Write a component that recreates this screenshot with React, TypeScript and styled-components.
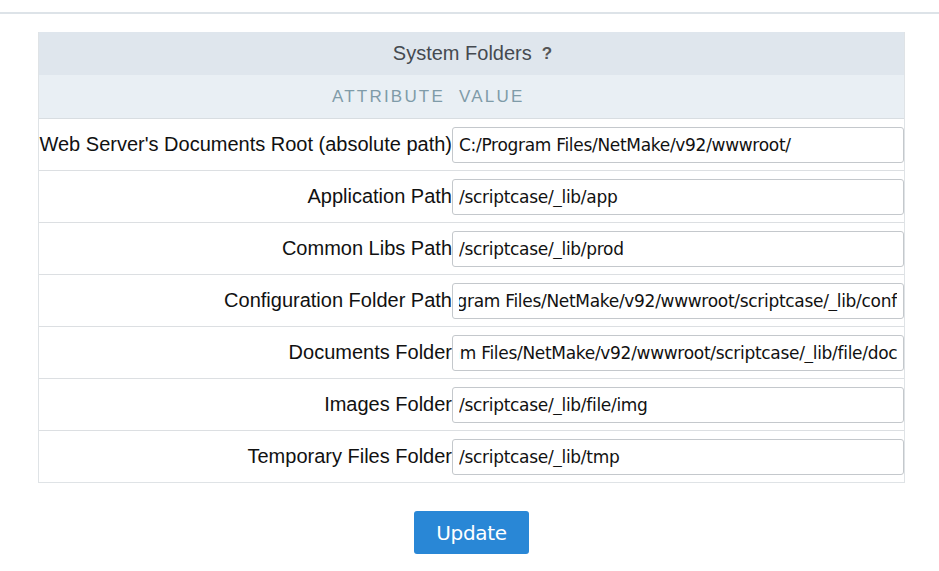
import React, { useEffect, useRef } from "react";
import styled, { createGlobalStyle } from "styled-components";

const Global = createGlobalStyle`
  body { margin: 0; font-family: "Liberation Sans", Arial, sans-serif; background: #fff; }
`;

const Page = styled.div`
  border-top: 2px solid #dde3e8;
  margin-top: 12px;
  padding: 18px 34px 0 38px;
`;

const Panel = styled.div`
  border: 1px solid #dfe3e6;
  border-top: none;
  display: grid;
  grid-template-columns: 413px 452px;
`;

const Title = styled.div`
  grid-column: 1 / -1;
  height: 43px;
  background: #dfe6ed;
  display: flex;
  align-items: center;
  justify-content: center;
  font-size: 20px;
  color: #454a50;
  gap: 10px;
  padding-left: 2px;
`;

const Help = styled.span`
  font-weight: bold;
  font-size: 17px;
  color: #555;
`;

const HeadCell = styled.div<{ $right?: boolean }>`
  height: 43px;
  background: #e9eff4;
  border-bottom: 1px solid #d8dde1;
  display: flex;
  align-items: center;
  justify-content: ${(p) => (p.$right ? "flex-end" : "flex-start")};
  padding: ${(p) => (p.$right ? "0 7px 0 0" : "0 0 0 7px")};
  font-size: 17px;
  letter-spacing: 2.2px;
  color: #7f9ba8;
`;

const Label = styled.div<{ $last?: boolean }>`
  height: 51px;
  border-bottom: ${(p) => (p.$last ? "none" : "1px solid #dcdfe2")};
  display: flex;
  align-items: center;
  justify-content: flex-end;
  font-size: 20px;
  color: #111;
  white-space: nowrap;
`;

const ValueCell = styled(Label)`
  justify-content: flex-start;
`;

const Input = styled.input`
  width: 452px;
  height: 36px;
  box-sizing: border-box;
  border: 1px solid #c4c8cc;
  border-radius: 3px;
  padding: 0 6px;
  font-family: "DejaVu Sans", Tahoma, sans-serif;
  font-size: 17px;
  letter-spacing: -0.3px;
  color: #111;
  outline: none;
`;

const Actions = styled.div`
  display: flex;
  justify-content: center;
  padding-top: 28px;
`;

const Button = styled.button`
  width: 115px;
  height: 43px;
  background: #2987d6;
  border: none;
  border-radius: 3px;
  color: #fff;
  font-family: "DejaVu Sans", Tahoma, sans-serif;
  font-size: 20px;
  letter-spacing: -0.3px;
`;

const rows: [string, string, boolean][] = [
  ["Web Server's Documents Root (absolute path)", "C:/Program Files/NetMake/v92/wwwroot/", false],
  ["Application Path", "/scriptcase/_lib/app", false],
  ["Common Libs Path", "/scriptcase/_lib/prod", false],
  ["Configuration Folder Path", "C:/Program Files/NetMake/v92/wwwroot/scriptcase/_lib/conf", true],
  ["Documents Folder", "C:/Program Files/NetMake/v92/wwwroot/scriptcase/_lib/file/doc", true],
  ["Images Folder", "/scriptcase/_lib/file/img", false],
  ["Temporary Files Folder", "/scriptcase/_lib/tmp", false],
];

function Field({ value, end }: { value: string; end: boolean }) {
  const ref = useRef<HTMLInputElement>(null);
  useEffect(() => {
    if (end && ref.current) ref.current.scrollLeft = ref.current.scrollWidth;
  }, [end]);
  return <Input ref={ref} defaultValue={value} />;
}

export default function App() {
  return (
    <>
      <Global />
      <Page>
        <Panel>
          <Title>
            System Folders <Help>?</Help>
          </Title>
          <HeadCell $right>ATTRIBUTE</HeadCell>
          <HeadCell>VALUE</HeadCell>
          {rows.map(([l, v, e], i) => (
            <React.Fragment key={l}>
              <Label $last={i === rows.length - 1}>{l}</Label>
              <ValueCell $last={i === rows.length - 1}>
                <Field value={v} end={e} />
              </ValueCell>
            </React.Fragment>
          ))}
        </Panel>
        <Actions>
          <Button>Update</Button>
        </Actions>
      </Page>
    </>
  );
}
